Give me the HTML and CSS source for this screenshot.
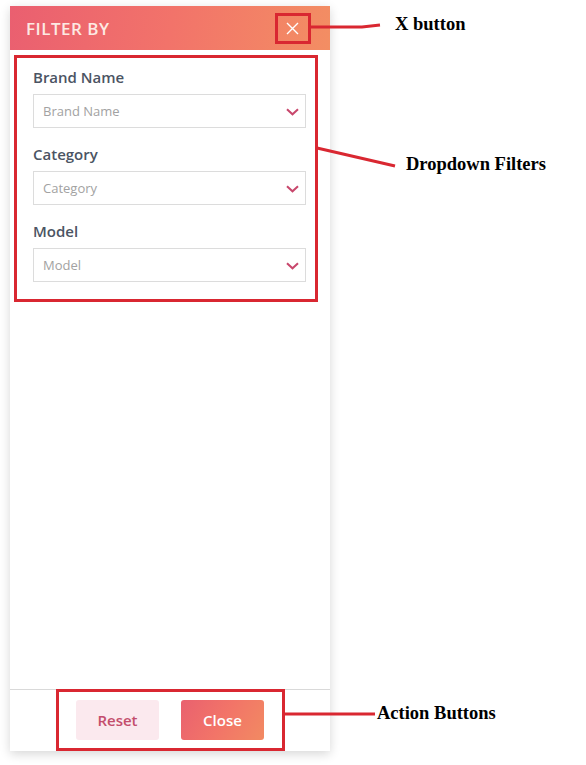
FILE: index.html
```html
<!DOCTYPE html>
<html lang="en">
<head>
  <meta charset="UTF-8">
  <title>Filter By</title>
  <link rel="stylesheet" href="styles.css">
</head>
<body>

<div class="panel">
  <div class="panel-head">
    <span class="panel-title">FILTER BY</span>
    <button class="close-x" aria-label="Close">
      <svg width="13" height="13" viewBox="0 0 13 13"><path d="M1 1 L12 12 M12 1 L1 12" stroke="#fff" stroke-width="1.4" fill="none"/></svg>
    </button>
  </div>

  <div class="panel-body">
    <label class="field-label">Brand Name</label>
    <div class="select">
      <span>Brand Name</span>
      <svg class="chev" width="13" height="8" viewBox="0 0 13 8"><path d="M1 1.2 L6.5 6.3 L12 1.2" stroke="#c8476c" stroke-width="2" fill="none"/></svg>
    </div>

    <label class="field-label">Category</label>
    <div class="select">
      <span>Category</span>
      <svg class="chev" width="13" height="8" viewBox="0 0 13 8"><path d="M1 1.2 L6.5 6.3 L12 1.2" stroke="#c8476c" stroke-width="2" fill="none"/></svg>
    </div>

    <label class="field-label">Model</label>
    <div class="select">
      <span>Model</span>
      <svg class="chev" width="13" height="8" viewBox="0 0 13 8"><path d="M1 1.2 L6.5 6.3 L12 1.2" stroke="#c8476c" stroke-width="2" fill="none"/></svg>
    </div>
  </div>

  <div class="panel-foot">
    <button class="btn btn-reset">Reset</button>
    <button class="btn btn-close">Close</button>
  </div>
</div>

<!-- annotations -->
<div class="mark mark-x"></div>
<div class="mark mark-filters"></div>
<div class="mark mark-actions"></div>

<svg class="leaders" width="586" height="765">
  <path d="M311 27 L362 27 L380 25" stroke="#d92731" stroke-width="3" fill="none"/>
  <path d="M317 148 L395 166" stroke="#d92731" stroke-width="3" fill="none"/>
  <path d="M285 714 L375 714" stroke="#d92731" stroke-width="3" fill="none"/>
</svg>

<div class="note note-x">X button</div>
<div class="note note-filters">Dropdown Filters</div>
<div class="note note-actions">Action Buttons</div>

</body>
</html>
```

FILE: styles.css
```css
body {
  margin: 0;
  background: #fff;
  font-family: 'Open Sans', 'Noto Sans', sans-serif;
  position: relative;
  width: 586px;
  height: 765px;
  overflow: hidden;
}

.panel {
  margin: 6px 0 0 10px;
  width: 320px;
  height: 745px;
  background: #fff;
  box-shadow: 0 3px 10px rgba(0,0,0,0.16);
  display: flex;
  flex-direction: column;
}

.panel-head {
  height: 44px;
  background: linear-gradient(100deg, #ea5f70 0%, #f2736a 50%, #f38e63 100%);
  display: flex;
  align-items: center;
  justify-content: space-between;
  padding: 0 31px 0 16px;
}

.panel-title {
  color: #fde9e3;
  font-size: 17px;
  font-weight: 600;
  letter-spacing: 0.5px;
}

.close-x {
  background: none;
  border: none;
  padding: 0;
  width: 13px;
  height: 13px;
  display: flex;
  cursor: pointer;
}

.panel-body {
  flex: 1;
  padding: 16px 24px 0 23px;
  display: flex;
  flex-direction: column;
}

.field-label {
  font-size: 15px;
  font-weight: 600;
  color: #4b5463;
  line-height: 22px;
  margin-bottom: 6px;
}

.select {
  height: 32px;
  border: 1px solid #dcdcdc;
  display: flex;
  align-items: center;
  justify-content: space-between;
  padding: 0 6px 0 9px;
  margin-bottom: 15px;
  font-size: 13px;
  color: #a2a2a2;
}

.chev {
  margin-top: 1px;
}

.panel-foot {
  height: 62px;
  border-top: 1px solid #d9d9d9;
  display: flex;
  justify-content: center;
  align-items: flex-start;
  gap: 22px;
  padding-top: 10px;
  box-sizing: border-box;
}

.btn {
  width: 83px;
  height: 40px;
  border: none;
  border-radius: 3px;
  font-family: 'Open Sans', 'Noto Sans', sans-serif;
  font-size: 15px;
  font-weight: 600;
  cursor: pointer;
}

.btn-reset {
  background: #fbe9ee;
  color: #c34d6c;
}

.btn-close {
  background: linear-gradient(120deg, #e9616f 0%, #f27468 50%, #f28a62 100%);
  color: #fff;
}

/* annotation overlay */
.mark {
  position: absolute;
  border: 3px solid #d92731;
  box-sizing: border-box;
}

.mark-x { left: 275px; top: 13px; width: 36px; height: 31px; }
.mark-filters { left: 14px; top: 55px; width: 304px; height: 247px; }
.mark-actions { left: 56px; top: 689px; width: 229px; height: 62px; }

.leaders {
  position: absolute;
  left: 0;
  top: 0;
}

.note {
  position: absolute;
  font-family: 'Liberation Serif', serif;
  font-weight: bold;
  font-size: 18.5px;
  color: #000;
  line-height: 20px;
}

.note-x { left: 395px; top: 14px; }
.note-filters { left: 406px; top: 154px; }
.note-actions { left: 377px; top: 703px; }
```
